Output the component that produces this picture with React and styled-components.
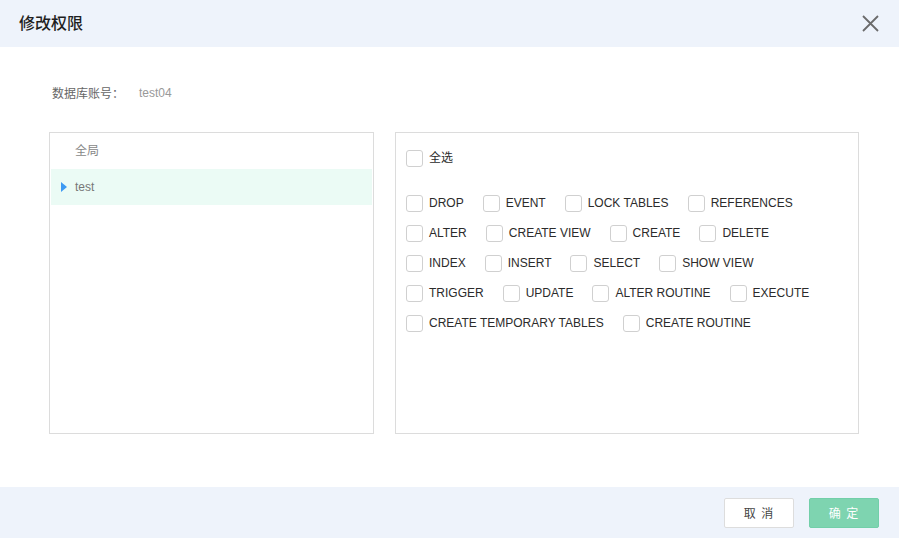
import React, { useState } from 'react';
import styled, { createGlobalStyle } from 'styled-components';

const GlobalStyle = createGlobalStyle`
  html, body {
    margin: 0;
    padding: 0;
    background: #ffffff;
  }
  * {
    box-sizing: border-box;
  }
`;

const privilegeRows = [
  ['DROP', 'EVENT', 'LOCK TABLES', 'REFERENCES'],
  ['ALTER', 'CREATE VIEW', 'CREATE', 'DELETE'],
  ['INDEX', 'INSERT', 'SELECT', 'SHOW VIEW'],
  ['TRIGGER', 'UPDATE', 'ALTER ROUTINE', 'EXECUTE'],
  ['CREATE TEMPORARY TABLES', 'CREATE ROUTINE'],
];

const scopes = [
  { id: 'global', name: '全局', expandable: false },
  { id: 'test', name: 'test', expandable: true },
];

export default function App() {
  const [activeScope, setActiveScope] = useState('test');
  const [checked, setChecked] = useState({});

  const toggle = (name) => {
    setChecked((prev) => ({ ...prev, [name]: !prev[name] }));
  };

  const allNames = privilegeRows.flat();
  const allChecked = allNames.every((n) => checked[n]);

  const toggleAll = () => {
    const next = {};
    allNames.forEach((n) => {
      next[n] = !allChecked;
    });
    setChecked(next);
  };

  return (
    <>
      <GlobalStyle />
      <Dialog>
        <Header>
          <Title>修改权限</Title>
          <CloseButton aria-label="close">
            <svg width="17" height="17" viewBox="0 0 17 17">
              <path d="M1 1 L16 16 M16 1 L1 16" stroke="#6b6b6b" strokeWidth="1.8" fill="none" />
            </svg>
          </CloseButton>
        </Header>

        <Body>
          <AccountLine>
            <AccountLabel>数据库账号：</AccountLabel>
            <AccountValue>test04</AccountValue>
          </AccountLine>

          <Panels>
            <ScopePanel>
              {scopes.map((scope) => (
                <ScopeRow
                  key={scope.id}
                  $active={activeScope === scope.id}
                  onClick={() => setActiveScope(scope.id)}
                >
                  <Caret>{scope.expandable && <CaretShape />}</Caret>
                  <ScopeName $dim={!scope.expandable}>{scope.name}</ScopeName>
                </ScopeRow>
              ))}
            </ScopePanel>

            <PrivilegePanel>
              <SelectAllRow>
                <CheckItem onClick={toggleAll}>
                  <Box $checked={allChecked} />
                  <CheckLabel $cjk>全选</CheckLabel>
                </CheckItem>
              </SelectAllRow>
              {privilegeRows.map((row, i) => (
                <PrivRow key={i}>
                  {row.map((name) => (
                    <CheckItem key={name} onClick={() => toggle(name)}>
                      <Box $checked={!!checked[name]} />
                      <CheckLabel>{name}</CheckLabel>
                    </CheckItem>
                  ))}
                </PrivRow>
              ))}
            </PrivilegePanel>
          </Panels>
        </Body>

        <Footer>
          <Button>取 消</Button>
          <Button $primary>确 定</Button>
        </Footer>
      </Dialog>
    </>
  );
}

const Dialog = styled.div`
  width: 899px;
  height: 538px;
  display: flex;
  flex-direction: column;
  font-family: 'Liberation Sans', 'Noto Sans CJK SC', sans-serif;
  background: #ffffff;
`;

const Header = styled.div`
  height: 47px;
  flex-shrink: 0;
  display: flex;
  justify-content: space-between;
  align-items: flex-start;
  padding: 12px 19px 0 19px;
  background: #eef3fb;
`;

const Title = styled.div`
  font-family: 'Noto Sans CJK SC', sans-serif;
  font-size: 16px;
  line-height: 20px;
  font-weight: 500;
  color: #1f1f1f;
`;

const CloseButton = styled.div`
  width: 17px;
  height: 17px;
  margin-top: 3px;
  margin-right: 1px;
  cursor: pointer;
  svg {
    display: block;
  }
`;

const Body = styled.div`
  flex: 1;
  padding: 36px 40px 0 49px;
`;

const AccountLine = styled.div`
  display: flex;
  align-items: center;
  height: 18px;
  padding-left: 3px;
  font-size: 12px;
`;

const AccountLabel = styled.span`
  font-family: 'Noto Sans CJK SC', sans-serif;
  color: #666666;
  width: 87px;
`;

const AccountValue = styled.span`
  color: #999999;
  margin-top: 2px;
`;

const Panels = styled.div`
  display: flex;
  gap: 21px;
  margin-top: 31px;
`;

const ScopePanel = styled.div`
  width: 325px;
  height: 302px;
  border: 1px solid #dcdcdc;
  padding: 0 1px;
`;

const ScopeRow = styled.div`
  display: flex;
  align-items: center;
  height: 36px;
  padding-left: 10px;
  background: ${(p) => (p.$active ? '#ebfbf5' : 'transparent')};
  cursor: pointer;
`;

const Caret = styled.span`
  width: 14px;
  display: flex;
  align-items: center;
`;

const CaretShape = styled.span`
  width: 0;
  height: 0;
  border-top: 5px solid transparent;
  border-bottom: 5px solid transparent;
  border-left: 6px solid #3d9af3;
`;

const ScopeName = styled.span`
  font-size: 12px;
  margin-top: ${(p) => (p.$dim ? '-3px' : '0')};
  color: ${(p) => (p.$dim ? '#888888' : '#777777')};
  font-family: 'Liberation Sans', 'Noto Sans CJK SC', sans-serif;
`;

const PrivilegePanel = styled.div`
  width: 464px;
  height: 302px;
  border: 1px solid #dcdcdc;
  padding: 16px 10px 0 10px;
`;

const SelectAllRow = styled.div`
  display: flex;
  height: 18px;
  margin-bottom: 27px;
`;

const PrivRow = styled.div`
  display: flex;
  height: 18px;
  margin-bottom: 12px;
`;

const CheckItem = styled.label`
  display: flex;
  align-items: center;
  margin-right: 19px;
  cursor: pointer;
`;

const Box = styled.span`
  width: 17px;
  height: 17px;
  border: 1px solid #d0d0d0;
  border-radius: 3px;
  background: ${(p) => (p.$checked ? '#7fd4b1' : '#ffffff')};
  margin-right: 6px;
  flex-shrink: 0;
`;

const CheckLabel = styled.span`
  font-size: 12px;
  color: #2b2b2b;
  margin-top: ${(p) => (p.$cjk ? '-3px' : '0')};
  font-family: 'Liberation Sans', 'Noto Sans CJK SC', sans-serif;
  white-space: nowrap;
`;

const Footer = styled.div`
  height: 51px;
  flex-shrink: 0;
  display: flex;
  justify-content: flex-end;
  align-items: center;
  gap: 15px;
  padding-right: 20px;
  background: #eef3fb;
`;

const Button = styled.div`
  width: 70px;
  height: 30px;
  display: flex;
  align-items: center;
  justify-content: center;
  border-radius: 2px;
  font-family: 'Liberation Sans', 'Noto Sans CJK SC', sans-serif;
  font-size: 12px;
  letter-spacing: 1px;
  border: 1px solid ${(p) => (p.$primary ? '#72cfa9' : '#dddddd')};
  background: ${(p) => (p.$primary ? '#7ed4b0' : '#ffffff')};
  color: ${(p) => (p.$primary ? '#ffffff' : '#444444')};
  cursor: pointer;
`;
